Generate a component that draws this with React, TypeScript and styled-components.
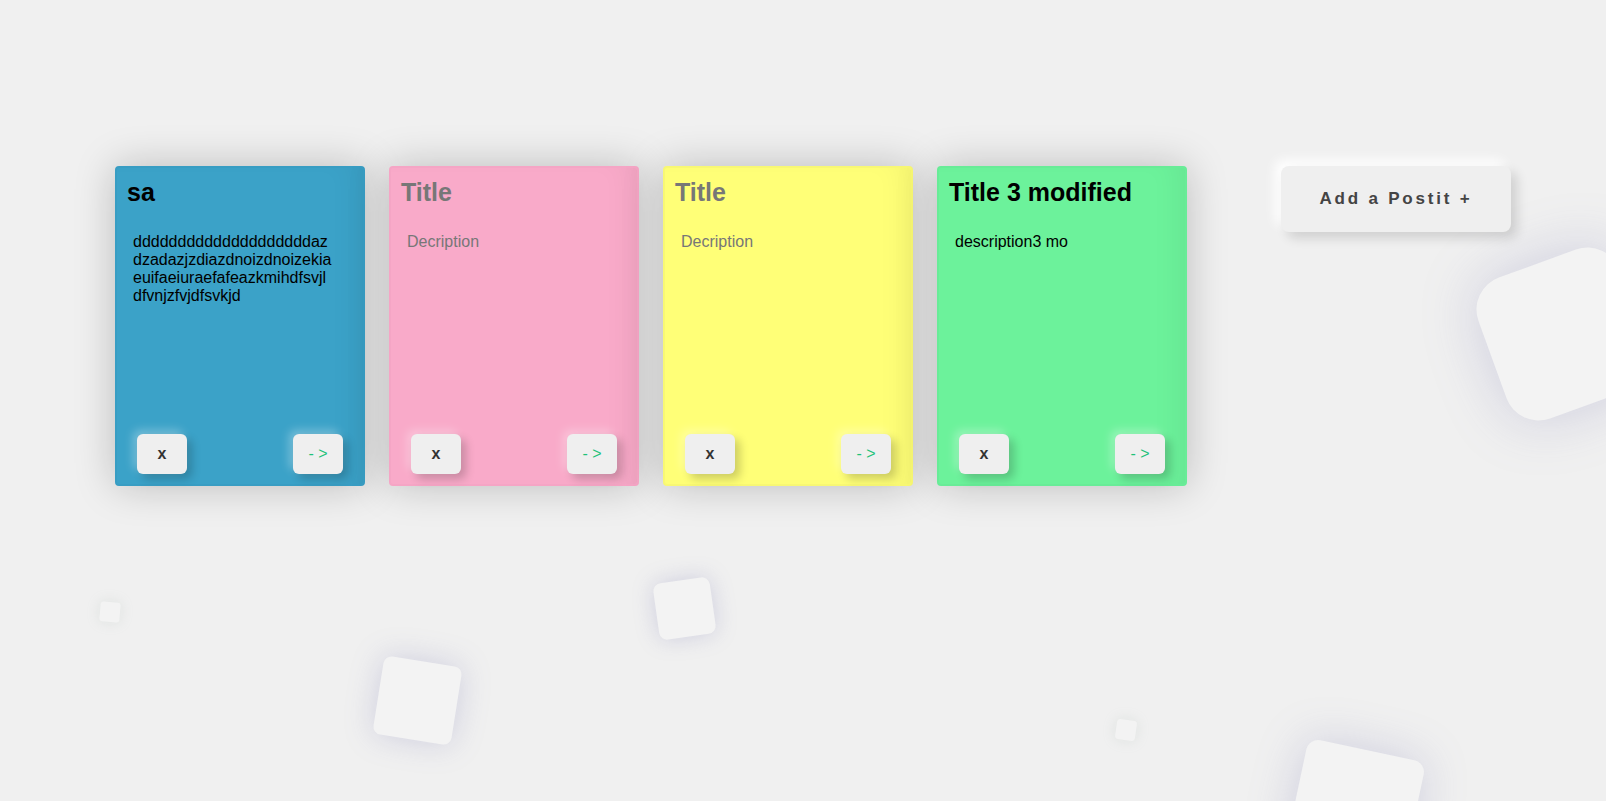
import React from 'react';
import styled, { createGlobalStyle } from 'styled-components';

const GlobalStyle = createGlobalStyle`
  html, body {
    margin: 0;
    padding: 0;
    background: #f0f0f0;
    font-family: 'Liberation Sans', Arial, sans-serif;
    overflow: hidden;
  }
`;

const Page = styled.main`
  position: relative;
  width: 100vw;
  height: 100vh;
  overflow: hidden;
  box-sizing: border-box;
  padding: 166px 0 0 115px;
`;

const Shape = styled.div<{ $x: number; $y: number; $size: number; $rot: number; $radius: number; $tint?: string }>`
  position: absolute;
  left: ${(p) => p.$x - p.$size / 2}px;
  top: ${(p) => p.$y - p.$size / 2}px;
  width: ${(p) => p.$size}px;
  height: ${(p) => p.$size}px;
  border-radius: ${(p) => p.$radius}px;
  background: #f3f3f3;
  transform: rotate(${(p) => p.$rot}deg);
  box-shadow: 0 0 ${(p) => Math.max(14, p.$size / 2.6)}px ${(p) => p.$tint || 'rgba(120, 120, 175, 0.28)'};
  z-index: 0;
`;

const Board = styled.section`
  position: relative;
  z-index: 1;
  display: flex;
  align-items: flex-start;
  gap: 24px;
`;

const Card = styled.article<{ $bg: string; $edge: string }>`
  box-sizing: border-box;
  width: 250px;
  height: 320px;
  padding: 10px;
  display: flex;
  flex-direction: column;
  background: ${(p) => p.$bg};
  border: 2px solid ${(p) => p.$edge};
  border-radius: 4px;
  box-shadow: 0 0 40px rgba(0, 0, 0, 0.22), inset -24px 0 30px -18px rgba(0, 0, 0, 0.06);
`;

const Title = styled.h2<{ $empty: boolean }>`
  margin: 0;
  font-size: 25px;
  line-height: 28.75px;
  font-weight: 700;
  color: ${(p) => (p.$empty ? '#777777' : '#000000')};
`;

const Description = styled.p<{ $empty: boolean }>`
  margin: 26px 0 0 6px;
  width: 200px;
  font-size: 16px;
  line-height: 18px;
  word-break: break-all;
  color: ${(p) => (p.$empty ? '#777777' : '#000000')};
`;

const Actions = styled.div`
  margin-top: auto;
  padding: 0 10px;
  display: flex;
  justify-content: space-between;
`;

const SmallButton = styled.button<{ $accent?: boolean }>`
  width: 50px;
  height: 40px;
  border: none;
  border-radius: 6px;
  background: #efefef;
  font-family: 'Liberation Sans', Arial, sans-serif;
  font-size: 16px;
  font-weight: ${(p) => (p.$accent ? 400 : 700)};
  color: ${(p) => (p.$accent ? '#1ec27a' : '#333333')};
  box-shadow: 5px 5px 10px rgba(0, 0, 0, 0.2), -4px -4px 10px rgba(255, 255, 255, 0.3);
  cursor: pointer;
`;

const AddButton = styled.button`
  margin-left: 70px;
  width: 230px;
  height: 66px;
  border: none;
  border-radius: 8px;
  background: #efefef;
  font-family: 'Liberation Sans', Arial, sans-serif;
  font-size: 17px;
  font-weight: 700;
  letter-spacing: 2.8px;
  color: #444444;
  box-shadow: 6px 6px 12px rgba(0, 0, 0, 0.14), -6px -6px 12px #ffffff;
  cursor: pointer;
`;

type Postit = {
  title: string;
  description: string;
  bg: string;
  edge: string;
};

const postits: Postit[] = [
  {
    title: 'sa',
    description: 'ddddddddddddddddddddazdzadazjzdiazdnoizdnoizekiaeuifaeiuraefafeazkmihdfsvjldfvnjzfvjdfsvkjd',
    bg: '#3ba2c8',
    edge: '#389dc3',
  },
  { title: '', description: '', bg: '#f9aac9', edge: '#f5a5c5' },
  { title: '', description: '', bg: '#ffff77', edge: '#f8f873' },
  { title: 'Title 3 modified', description: 'description3 mo', bg: '#6cf29b', edge: '#68ec97' },
];

const shapes = [
  { x: 110, y: 612, size: 20, rot: 5, radius: 3, tint: 'rgba(150, 170, 160, 0.2)' },
  { x: 684, y: 608, size: 57, rot: -8, radius: 8 },
  { x: 417, y: 700, size: 79, rot: 9, radius: 8 },
  { x: 1126, y: 730, size: 20, rot: 8, radius: 3, tint: 'rgba(150, 170, 160, 0.2)' },
  { x: 1355, y: 809, size: 120, rot: 12, radius: 12 },
  { x: 1563, y: 334, size: 150, rot: -20, radius: 34 },
];

const App: React.FC = () => {
  return (
    <>
      <GlobalStyle />
      <Page>
        {shapes.map((s, i) => (
          <Shape key={i} $x={s.x} $y={s.y} $size={s.size} $rot={s.rot} $radius={s.radius} $tint={s.tint} />
        ))}
        <Board>
          {postits.map((p, i) => (
            <Card key={i} $bg={p.bg} $edge={p.edge}>
              <Title $empty={!p.title}>{p.title || 'Title'}</Title>
              <Description $empty={!p.description}>{p.description || 'Decription'}</Description>
              <Actions>
                <SmallButton>x</SmallButton>
                <SmallButton $accent>- &gt;</SmallButton>
              </Actions>
            </Card>
          ))}
          <AddButton>Add a Postit +</AddButton>
        </Board>
      </Page>
    </>
  );
};

export default App;
